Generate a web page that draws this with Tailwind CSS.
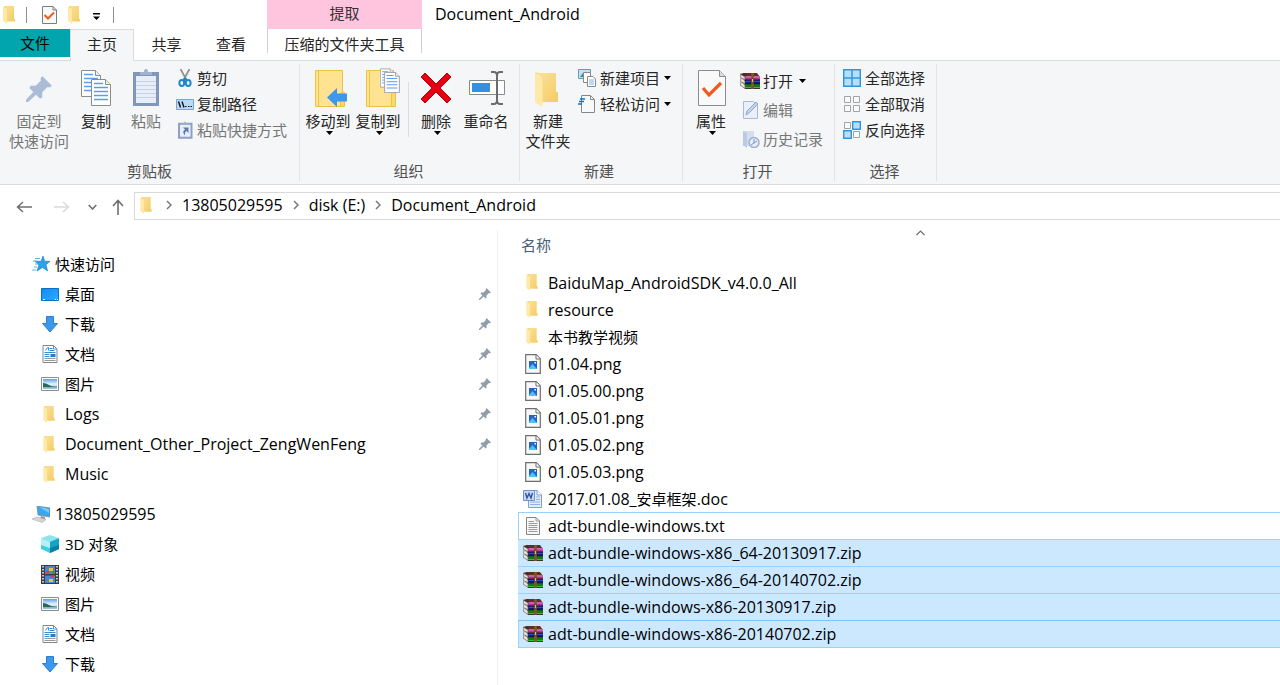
<!DOCTYPE html>
<html lang="zh-CN">
<head>
<meta charset="utf-8">
<title>Document_Android</title>
<script src="https://cdn.jsdelivr.net/npm/@tailwindcss/browser@4"></script>
</head>
<body class="min-h-screen flex flex-col overflow-hidden bg-white text-black text-[15px] leading-5 font-['Open_Sans','Noto_Sans_CJK_SC',sans-serif]">
<svg class="absolute w-0 h-0" aria-hidden="true">
  <linearGradient id="fg" x1="0" y1="0" x2="1" y2="1"><stop offset="0" stop-color="#fbe09a"/><stop offset="1" stop-color="#f3cd62"/></linearGradient>
  <linearGradient id="sky" x1="0" y1="0" x2="1" y2="1"><stop offset="0" stop-color="#0f8af0"/><stop offset="1" stop-color="#33aaff"/></linearGradient>
  <linearGradient id="pic" x1="0" y1="0" x2="0" y2="1"><stop offset="0" stop-color="#5f9fe0"/><stop offset=".5" stop-color="#e4f2fb"/><stop offset="1" stop-color="#8fc3e6"/></linearGradient>
  <symbol id="folder" viewBox="0 0 12 18"><path d="M2 0h9v13l1 0v2.500H4z" fill="url(#fg)"/><path d="M0 1l4 2v15l-4-3z" fill="#ffe9a9"/><path d="M0 1l2-1h1v2.500z" fill="#f6d67c"/></symbol>
  <symbol id="bigfolder" viewBox="0 0 26 36"><path d="M4 1h17v19h2v10H7z" fill="url(#fg)"/><path d="M0 1h3l5 4v26l-1 4-7-5z" fill="#ffe9a9"/><path d="M0 1h3l5 4v25" fill="none" stroke="#f6d780" stroke-width="1"/></symbol>
  <symbol id="clipfolder" viewBox="0 0 32 38"><path d="M.500.500h27v21l2 1v14H.500z" fill="#ffe391" stroke="#e9c545"/><path d="M3.500 1v35M25.500 36V24q2-4 4 0v12" fill="#fbd770" stroke="#e9c545"/></symbol>
  <symbol id="page" viewBox="0 0 20 27"><path d="M.500.500h14l5 5v21H.500z" fill="#fff" stroke="#8c8c8c"/><path d="M14.500.500v5h5" fill="#eee" stroke="#8c8c8c"/><path d="M3 8.500h14M3 12.500h14M3 16.500h14M3 20.500h14M3 4.500h9" stroke="#5b9bf0" stroke-width="1.300"/></symbol>
  <symbol id="check" viewBox="0 0 28 36"><path d="M.500.500h21l6 6v29H.500z" fill="#f9f9f9" stroke="#8d8d8d"/><path d="M21.500.500v6h6" fill="#ddd" stroke="#8d8d8d"/><path d="M5 18l6 7L23 13" fill="none" stroke="#f05a1c" stroke-width="3.200"/></symbol>
  <symbol id="pin" viewBox="0 0 12 12"><path d="M7.500 0L12 4.500l-1.200.800-.900-.200L7.500 7.500l0 2.300-1 .700L4.600 8.600 1 12H0v-1l3.400-3.600L1.500 5.500l.700-1 2.300 0L6.900 2.100 6.700 1.200z"/></symbol>
  <symbol id="rar" viewBox="0 0 20 16"><path d="M3 0h14l3 4H6z" fill="#5e2f22"/><path d="M0 1l4-1 3 4H3z" fill="#4a2a1c"/><path d="M4 3h16v4H5z" fill="#b5338f"/><path d="M6 4h14" stroke="#e58ad0"/><path d="M4 7h16v4H5z" fill="#14147c"/><path d="M6 8.300h14" stroke="#2f5de8"/><path d="M4 11h16v4.500H5z" fill="#107c12"/><path d="M5 14.500h15" stroke="#2bc42e"/><path d="M5 15.600h15M4 10.900h16M4 6.900h16" stroke="#221a1a" stroke-width=".900"/><path d="M0 1l5 3v2.500L1.500 5 5 8v2.500L1.500 9 5 12v3.500L0 12l1-2-1-2 1-2z" fill="#e8e4de" stroke="#6c625c" stroke-width=".700"/><path d="M12.500 0v16" stroke="#85552a" stroke-width="2.600"/><path d="M11.500 5.500h2v4h-2z" fill="#d8c080" stroke="#5a3a14" stroke-width=".800"/></symbol>
  <symbol id="down" viewBox="0 0 16 17"><path d="M4.500.500h7v7h4L8 16 .500 7.500h4z" fill="#3b98ec" stroke="#2b7fd0"/></symbol>
  <symbol id="doc" viewBox="0 0 15 18"><path d="M.500.500h10.500l3.500 3.500v13.500H.500z" fill="#fff" stroke="#858585"/><path d="M11 .500v3.500h3.500" fill="none" stroke="#858585"/><path d="M3 5.500l2-3h1v3M7 3.500h3M7 5.500h5M2 7.500h11M2 9.500h5M2 11.500h5" fill="none" stroke="#2f8fd8"/><path d="M8 9h5v3H8z" fill="#2f78c0"/><path d="M2 13.500h11M2 15.500h11" stroke="#999"/></symbol>
  <symbol id="photo" viewBox="0 0 18 14"><path d="M.500.500h17v13H.500z" fill="#fff" stroke="#8c8c8c"/><path d="M2 2h14v10H2z" fill="url(#pic)"/><path d="M2 6q3 0 6 2t8 1.500v.700H2z" fill="#286a55"/></symbol>
  <symbol id="png" viewBox="0 0 16 20"><path d="M.700.700h10.600l4 4v14.600H.700z" fill="#f8f8f8" stroke="#6e6e6e" stroke-width="1.200"/><path d="M11 1v4h4" fill="#fff" stroke="#6e6e6e"/><path d="M4 7h8v8H4z" fill="#2463c8"/><path d="M4 14l3.500-4 4.500 5H4z" fill="#4bc3f5"/><path d="M9.500 8h1.500v1.500H9.500z" fill="#fff"/></symbol>
  <symbol id="chev" viewBox="0 0 6 10"><path d="M1 1l4 4-4 4" fill="none" stroke="#777" stroke-width="1.500"/></symbol>
</svg>

<header class="bg-white">
  <div class="flex h-[29px] items-center">
    <div class="flex w-[267px] items-center pl-[3px]">
      <svg class="w-3 h-[18px]"><use href="#folder"/></svg>
      <span class="ml-[11px] h-4 w-px bg-[#8e8e8e]"></span>
      <button class="ml-[15px]" aria-label="属性"><svg class="block w-[15px] h-[18px]" viewBox="0 0 15 18"><path d="M.500.500h10.500l3.500 3.500v13.500H.500z" fill="#f9f9f9" stroke="#7d7d7d"/><path d="M11 .500v3.500h3.500" fill="none" stroke="#7d7d7d"/><path d="M2.500 9l3.500 3.500 6-6" fill="none" stroke="#f05a1c" stroke-width="2"/></svg></button>
      <button class="ml-[11px]" aria-label="新建文件夹"><svg class="block w-3 h-[18px]"><use href="#folder"/></svg></button>
      <button class="ml-[13px] mt-[3px]" aria-label="自定义快速访问工具栏"><svg class="block w-[7px] h-[7px]" viewBox="0 0 7 7"><path d="M0 0h7v1.500H0zM0 3.500h7L3.500 7z"/></svg></button>
      <span class="ml-[13px] h-4 w-px bg-[#8e8e8e]"></span>
    </div>
    <div class="flex h-[29px] w-[155px] items-center justify-center bg-[#ffc5df] pb-1 text-[#333]">提取</div>
    <h1 class="ml-[13px] pb-[2px] text-base leading-5">Document_Android</h1>
  </div>
  <nav class="flex h-8 border-b border-[#dadbdc] text-[#262626]">
    <button class="h-7 w-[70px] bg-[#00a5ad] text-black">文件</button>
    <button class="-mb-px h-8 w-16 border border-b-0 border-[#dadbdc] bg-[#f5f6f7] pb-1">主页</button>
    <button class="h-[30px] w-[65px]">共享</button>
    <button class="h-[30px] w-16">查看</button>
    <div class="ml-1 flex h-6 w-[155px] border-x border-[#cfcfcf]"><button class="h-[30px] w-full">压缩的文件夹工具</button></div>
  </nav>
</header>

<section class="flex h-[124px] border-b border-[#dadbdc] bg-[#f5f6f7] py-[3px] text-[#262626]" aria-label="功能区">
  <div class="flex w-[300px] flex-col border-r border-[#e2e3e4]">
    <div class="flex flex-1">
      <button class="ml-[7px] flex w-16 flex-col items-center pt-[3px] text-[#767676]">
        <span class="flex h-11 items-center"><svg class="w-[26px] h-[26px]" fill="#abbdd6"><use href="#pin"/></svg></span>固定到<br>快速访问
      </button>
      <button class="flex w-[50px] flex-col items-center pt-[3px]">
        <span class="h-11 pt-[3px]"><svg class="w-[30px] h-9" viewBox="0 0 30 36"><use href="#page" width="20" height="27"/><use href="#page" x="10" y="9" width="20" height="27"/></svg></span>复制
      </button>
      <button class="flex w-[50px] flex-col items-center pt-[3px] text-[#767676]">
        <span class="h-11 pt-[2px]"><svg class="w-[26px] h-[37px]" viewBox="0 0 26 37"><path d="M0 3h26v34H0z" fill="#8296bd"/><path d="M3 7h20v27H3z" fill="#e8eef8"/><path d="M3 12.500h20M3 16.500h20M3 20.500h20M3 24.500h20M3 28.500h20" stroke="#c6d2e8"/><path d="M7 3h4q0-3 2-3t2 3h4v3H7z" fill="#a3b2cf"/></svg></span>粘贴
      </button>
      <div class="ml-[5px] flex flex-col pt-px">
        <button class="flex h-[26px] items-center gap-[3px]"><svg class="w-[18px] h-[18px]" viewBox="0 0 18 18"><path d="M4.500 0l6 11M13.500 0l-6 11" stroke="#909090" stroke-width="1.700"/><g fill="none" stroke="#2089c9" stroke-width="2"><ellipse cx="5.800" cy="14" rx="2.400" ry="3"/><ellipse cx="12.200" cy="14" rx="2.400" ry="3"/></g><path d="M7 10l2-2 2 2-1 3H8z" fill="#2089c9"/></svg>剪切</button>
        <button class="flex h-[26px] items-center gap-[3px]"><svg class="w-[18px] h-[11px]" viewBox="0 0 18 11"><path d="M.500.500h17v10H.500z" fill="#b4dcf8" stroke="#7ba7c7"/><path d="M2.500 2.500l2 6M6 2.500l2 6" stroke="#111" stroke-width="1.400"/><path d="M9 7.500h1.500M12 7.500h1.500M14.500 7.500H16" stroke="#111"/></svg>复制路径</button>
        <button class="flex h-[26px] items-center gap-[3px] text-[#767676]"><svg class="w-[18px] h-[18px]" viewBox="0 0 18 18"><path d="M3 2.800h12.500v14H3z" fill="#e8eef8" stroke="#8ea1c4" stroke-width="2"/><path d="M6 2h2q1.200-3 2.400 0h2v2H6z" fill="#9fb0ce"/><path d="M7 6.500h5.500V12l-2-2q-2 1-1.500 4.500Q5.500 11 9 8.500z" fill="#5f7caf"/></svg>粘贴快捷方式</button>
      </div>
    </div>
    <div class="text-center text-[#505050]">剪贴板</div>
  </div>

  <div class="flex w-[220px] flex-col border-r border-[#e2e3e4]">
    <div class="flex flex-1">
      <button class="ml-[3px] flex w-[50px] flex-col items-center pt-[3px]">
        <span class="h-11 pl-[6px] pt-[3px]"><svg class="w-8 h-[38px]" viewBox="0 0 32 38"><use href="#clipfolder"/><path d="M12 27.500L22 18v5.500h10v8H22V37z" fill="#3b98ec"/></svg></span>移动到<svg class="ml-[3px] w-[7px] h-1" viewBox="0 0 7 4"><path d="M0 0h7L3.500 4z"/></svg>
      </button>
      <button class="flex w-[50px] flex-col items-center pt-[3px]">
        <span class="h-11 pl-[10px] pt-px"><svg class="w-[34px] h-10" viewBox="0 0 34 40"><use href="#clipfolder" y="2" width="32" height="38"/><use href="#page" x="14" width="14" height="20"/><use href="#page" x="18" y="4" width="16" height="21"/></svg></span>复制到<svg class="ml-[3px] w-[7px] h-1" viewBox="0 0 7 4"><path d="M0 0h7L3.500 4z"/></svg>
      </button>
      <span class="ml-[5px] mt-[18px] h-[55px] w-px bg-[#dcddde]"></span>
      <button class="ml-[2px] flex w-[50px] flex-col items-center pt-[3px]">
        <span class="h-11 pt-[5px]"><svg class="w-8 h-8" viewBox="0 0 32 32"><path d="M1 5l4-4 11 11L27 1l4 4-11 11 11 11-4 4-11-11L5 31l-4-4 11-11z" fill="#e60012" stroke="#b8000e"/></svg></span>删除<svg class="ml-[3px] w-[7px] h-1" viewBox="0 0 7 4"><path d="M0 0h7L3.500 4z"/></svg>
      </button>
      <button class="flex w-[50px] flex-col items-center pt-[3px]">
        <span class="h-11 pl-[2px] pt-1"><svg class="w-9 h-[34px]" viewBox="0 0 36 34"><path d="M.500 9.500h35v14H.500z" fill="#fff" stroke="#8a8a8a"/><path d="M3 12h18v9H3z" fill="#3490e4"/><path d="M28 3v28M22 1h3q3 0 3 4 0-4 3-4h3M22 33h3q3 0 3-4 0 4 3 4h3" fill="none" stroke="#6b6b6b" stroke-width="2"/></svg></span>重命名
      </button>
    </div>
    <div class="pr-[2px] text-center text-[#505050]">组织</div>
  </div>

  <div class="flex w-[163px] flex-col border-r border-[#e2e3e4]">
    <div class="flex flex-1">
      <button class="ml-[3px] flex w-[50px] flex-col items-center pt-[3px]">
        <span class="h-11 pt-[5px]"><svg class="w-[26px] h-9"><use href="#bigfolder"/></svg></span>新建<br>文件夹
      </button>
      <div class="ml-[5px] flex flex-col pt-px">
        <button class="flex h-[26px] items-center gap-1"><svg class="w-[18px] h-[18px]" viewBox="0 0 18 18"><path d="M.500.500h12v9H.500z" fill="#bfe3f2" stroke="#5aa0b8"/><path d="M2 8l3-4 3 4z" fill="#3b8d72"/><path d="M5.500 3.500h7v10h-7z" fill="#fff" stroke="#888"/><path d="M9.500 7.500H15l2.500 2.500v7.500h-8z" fill="#fff" stroke="#888"/><path d="M11 11h5M11 13h5M11 15h5" stroke="#7fb0ef"/></svg>新建项目<svg class="w-[7px] h-1" viewBox="0 0 7 4"><path d="M0 0h7L3.500 4z"/></svg></button>
        <button class="flex h-[26px] items-center gap-1"><svg class="w-[18px] h-[18px]" viewBox="0 0 18 18"><path d="M3.500.500h9l4 4v13h-13z" fill="#f9f9f9" stroke="#888"/><path d="M12.500.500v4h4" fill="none" stroke="#888"/><path d="M2 4h5M1 6.500h5M0 9h4" stroke="#1b74c4" stroke-width="1.500"/></svg>轻松访问<svg class="w-[7px] h-1" viewBox="0 0 7 4"><path d="M0 0h7L3.500 4z"/></svg></button>
      </div>
    </div>
    <div class="pr-1 text-center text-[#505050]">新建</div>
  </div>

  <div class="flex w-[152px] flex-col border-r border-[#e2e3e4]">
    <div class="flex flex-1">
      <button class="ml-[3px] flex w-[50px] flex-col items-center pt-[3px]">
        <span class="h-11 pl-[2px] pt-[3px]"><svg class="w-7 h-9"><use href="#check"/></svg></span>属性<svg class="ml-[3px] w-[7px] h-1" viewBox="0 0 7 4"><path d="M0 0h7L3.500 4z"/></svg>
      </button>
      <div class="ml-1 flex flex-col pt-[2px]">
        <button class="flex h-[29px] items-center gap-[3px]"><svg class="w-5 h-4"><use href="#rar"/></svg>打开<svg class="ml-[3px] w-[7px] h-1" viewBox="0 0 7 4"><path d="M0 0h7L3.500 4z"/></svg></button>
        <button class="flex h-[29px] items-center gap-[3px] text-[#767676]"><svg class="w-5 h-[18px]" viewBox="0 0 20 18"><path d="M3.500.500h10l4 4v13h-14z" fill="#eaf0f9" stroke="#a9bad6"/><path d="M6 14l1-4L16 1l2 2-9 9z" fill="#c3d2ea" stroke="#93a9cf"/></svg>编辑</button>
        <button class="flex h-[29px] items-center gap-[3px] text-[#767676]"><svg class="w-5 h-[18px]" viewBox="0 0 20 18"><path d="M3 1h11v15H3z" fill="#d4deee"/><path d="M3 1l4 2v15l-4-3z" fill="#bccbe3"/><circle cx="14" cy="12.500" r="5" fill="#e6edf8" stroke="#9db0d1" stroke-width="1.500"/><path d="M14 9v4l3-2M11 15l3-2" fill="none" stroke="#7f95be"/></svg>历史记录</button>
      </div>
    </div>
    <div class="pr-[2px] text-center text-[#505050]">打开</div>
  </div>

  <div class="flex w-[102px] flex-col border-r border-[#e2e3e4]">
    <div class="flex flex-1 flex-col pl-2 pt-px">
      <button class="flex h-[26px] items-center gap-1"><svg class="w-[18px] h-[18px]" viewBox="0 0 18 18"><path d="M.700.700h16.600v16.600H.700zM9 0v18M0 9h18" fill="#b5e0fd" stroke="#2f96e6" stroke-width="1.500"/></svg>全部选择</button>
      <button class="flex h-[26px] items-center gap-1"><svg class="w-[18px] h-[18px]" viewBox="0 0 18 18"><path d="M1.500 1.500h6v6h-6zM10.500 1.500h6v6h-6zM1.500 10.500h6v6h-6zM10.500 10.500h6v6h-6z" fill="#fafafa" stroke="#a3a3a3"/></svg>全部取消</button>
      <button class="flex h-[26px] items-center gap-1"><svg class="w-[18px] h-[18px]" viewBox="0 0 18 18"><path d="M1.500 1.500h6v6h-6zM10.500 10.500h6v6h-6z" fill="#fafafa" stroke="#a3a3a3"/><path d="M9.700.700h7.600v7.600H9.700zM.700 9.700h7.600v7.600H.700z" fill="#b5e0fd" stroke="#2f96e6" stroke-width="1.400"/></svg>反向选择</button>
    </div>
    <div class="pr-[2px] text-center text-[#505050]">选择</div>
  </div>
</section>

<nav class="flex h-[41px] items-center pt-[3px]" aria-label="地址栏">
  <button class="ml-4" aria-label="后退"><svg class="block w-4 h-3" viewBox="0 0 16 12"><path d="M7 1L1.500 6 7 11M1.500 6H16" fill="none" stroke="#6f6f6f" stroke-width="1.500"/></svg></button>
  <button class="ml-[22px]" aria-label="前进"><svg class="block w-4 h-3" viewBox="0 0 16 12"><path d="M9 1l5.500 5L9 11M14.500 6H0" fill="none" stroke="#dadada" stroke-width="1.500"/></svg></button>
  <button class="ml-[18px]" aria-label="最近的位置"><svg class="block w-[9px] h-[6px]" viewBox="0 0 9 6"><path d="M.700 1l3.800 4 3.800-4" fill="none" stroke="#6f6f6f" stroke-width="1.600"/></svg></button>
  <button class="ml-[15px]" aria-label="上移"><svg class="block w-3 h-4" viewBox="0 0 12 16"><path d="M1 7l5-5.500L11 7M6 1.500V16" fill="none" stroke="#6f6f6f" stroke-width="1.600"/></svg></button>
  <div class="-mt-[2px] ml-[10px] flex h-7 flex-1 items-center border border-r-0 border-[#d9d9d9] pb-[2px] pl-[5px] text-base leading-5">
    <svg class="w-3 h-[17px]"><use href="#folder"/></svg>
    <svg class="ml-[14px] w-[6px] h-[10px]"><use href="#chev"/></svg>
    <a href="#" class="ml-[10px]">13805029595</a>
    <svg class="ml-[10px] w-[6px] h-[10px]"><use href="#chev"/></svg>
    <a href="#" class="ml-[10px]">disk (E:)</a>
    <svg class="ml-[10px] w-[6px] h-[10px]"><use href="#chev"/></svg>
    <a href="#" class="ml-[10px]">Document_Android</a>
  </div>
</nav>

<main class="flex flex-1">
  <aside class="mt-1 w-[498px] border-r border-[#f0f0f0] pt-[19px]">
    <ul>
      <li><a href="#" class="flex h-[30px] items-center gap-[5px] pl-8"><svg class="w-[18px] h-4" viewBox="0 0 18 16"><path d="M11 0l1.700 5.300H18l-4 3.500 1.600 6.200-5-3.600L5 15l2-6L3 5.300h6z" fill="#2aa3ee" stroke="#1776b5" stroke-width=".600"/><path d="M3 2.500h5M1 5h4M3 8h3M2 11h3M0 14h4" stroke="#5bb8f0" stroke-width="1.100"/></svg>快速访问</a></li>
      <li class="flex h-[30px] items-center pl-[41px] pr-[6px]"><a href="#" class="flex flex-1 items-center gap-[6px]"><svg class="w-[18px] h-[13px]" viewBox="0 0 18 13"><path d="M.500.500h17v12H.500z" fill="url(#sky)" stroke="#0b70c0"/><path d="M2 11.500h2M14 11.500h1M16 11.500h1" stroke="#fff"/></svg>桌面</a><svg class="w-3 h-3" fill="#919da8"><use href="#pin"/></svg></li>
      <li class="flex h-[30px] items-center pl-[41px] pr-[6px]"><a href="#" class="flex flex-1 items-center gap-[6px]"><svg class="w-[18px] h-[17px]"><use href="#down"/></svg>下载</a><svg class="w-3 h-3" fill="#919da8"><use href="#pin"/></svg></li>
      <li class="flex h-[30px] items-center pl-[41px] pr-[6px]"><a href="#" class="flex flex-1 items-center gap-[6px]"><svg class="w-[18px] h-[18px]"><use href="#doc"/></svg>文档</a><svg class="w-3 h-3" fill="#919da8"><use href="#pin"/></svg></li>
      <li class="flex h-[30px] items-center pl-[41px] pr-[6px]"><a href="#" class="flex flex-1 items-center gap-[6px]"><svg class="w-[18px] h-[14px]"><use href="#photo"/></svg>图片</a><svg class="w-3 h-3" fill="#919da8"><use href="#pin"/></svg></li>
      <li class="flex h-[30px] items-center pl-[43px] pr-[6px]"><a href="#" class="flex flex-1 items-center gap-[10px] text-base leading-5"><svg class="w-3 h-[17px]"><use href="#folder"/></svg>Logs</a><svg class="w-3 h-3" fill="#919da8"><use href="#pin"/></svg></li>
      <li class="flex h-[30px] items-center pl-[43px] pr-[6px]"><a href="#" class="flex flex-1 items-center gap-[10px] text-base leading-5"><svg class="w-3 h-[17px]"><use href="#folder"/></svg>Document_Other_Project_ZengWenFeng</a><svg class="w-3 h-3" fill="#919da8"><use href="#pin"/></svg></li>
      <li class="flex h-[30px] items-center pl-[43px] pr-[6px]"><a href="#" class="flex flex-1 items-center gap-[10px] text-base leading-5"><svg class="w-3 h-[17px]"><use href="#folder"/></svg>Music</a></li>
    </ul>
    <ul class="mt-[10px]">
      <li><a href="#" class="flex h-[30px] items-center gap-[5px] pl-8 text-base leading-5"><svg class="w-[18px] h-[17px]" viewBox="0 0 18 17"><path d="M5 0l13 2v9L6 9z" fill="#3ba7ee" stroke="#6f8390" stroke-width=".700"/><path d="M7 1l10 2v4z" fill="#7cc8f8"/><path d="M9 10l4 1v2H8z" fill="#999"/><path d="M0 13l5-2 9 2.500-4 3z" fill="#d5d8da" stroke="#aaa" stroke-width=".600"/></svg>13805029595</a></li>
      <li><a href="#" class="flex h-[30px] items-center gap-[6px] pl-[41px]"><svg class="w-[18px] h-[18px]" viewBox="0 0 18 18"><path d="M0 3l9 3v12l-9-4z" fill="#3fcfe0"/><path d="M9 6l9-3v11l-9 4z" fill="#12a5c4"/><path d="M9 0l9 3-9 4-9-4z" fill="#8fe3ee"/><path d="M0 3l9 4v6l-9-3z" fill="#b5f0f5"/><path d="M9 13l9-3v4l-9 4z" fill="#0b7fa3"/></svg>3D 对象</a></li>
      <li><a href="#" class="flex h-[30px] items-center gap-[6px] pl-[41px]"><svg class="w-[18px] h-[19px]" viewBox="0 0 18 19"><path d="M0 0h18v19H0z" fill="#3c3c3c"/><path d="M4 1h10v8H4zM4 10.500h10V18H4z" fill="#4c85d6"/><path d="M8 3h4v3H8zM8 14h4v3H8z" fill="#f0c22e"/><path d="M5 6h3v2H5zM10 10.500h3v2h-3z" fill="#d43f31"/><path d="M11 6h3v3h-3z" fill="#3a9a3c"/><path d="M2 1v18M16 1v18" stroke="#eee" stroke-width="1.600" stroke-dasharray="1.500 1.500"/></svg>视频</a></li>
      <li><a href="#" class="flex h-[30px] items-center gap-[6px] pl-[41px]"><svg class="w-[18px] h-[14px]"><use href="#photo"/></svg>图片</a></li>
      <li><a href="#" class="flex h-[30px] items-center gap-[6px] pl-[41px]"><svg class="w-[18px] h-[18px]"><use href="#doc"/></svg>文档</a></li>
      <li><a href="#" class="flex h-[30px] items-center gap-[6px] pl-[41px]"><svg class="w-[18px] h-[17px]"><use href="#down"/></svg>下载</a></li>
    </ul>
  </aside>

  <section class="flex-1 pl-5" aria-label="文件列表">
    <div class="flex h-[43px] items-start">
      <button class="ml-[3px] mt-[9px] w-[395px] text-left text-[#4c607a]">名称</button>
      <svg class="mt-1 w-[9px] h-[6px]" viewBox="0 0 9 6"><path d="M.500 5l4-4 4 4" fill="none" stroke="#6f6f6f" stroke-width="1.200"/></svg>
    </div>
    <ul class="text-base leading-5">
      <li class="flex h-[27px] items-center gap-[10px] pl-2"><svg class="w-3 h-[17px]"><use href="#folder"/></svg>BaiduMap_AndroidSDK_v4.0.0_All</li>
      <li class="flex h-[27px] items-center gap-[10px] pl-2"><svg class="w-3 h-[17px]"><use href="#folder"/></svg>resource</li>
      <li class="flex h-[27px] items-center gap-[10px] pl-2 text-[15px]"><svg class="w-3 h-[17px]"><use href="#folder"/></svg>本书教学视频</li>
      <li class="flex h-[27px] items-center gap-[7px] pl-[7px]"><svg class="w-4 h-5"><use href="#png"/></svg>01.04.png</li>
      <li class="flex h-[27px] items-center gap-[7px] pl-[7px]"><svg class="w-4 h-5"><use href="#png"/></svg>01.05.00.png</li>
      <li class="flex h-[27px] items-center gap-[7px] pl-[7px]"><svg class="w-4 h-5"><use href="#png"/></svg>01.05.01.png</li>
      <li class="flex h-[27px] items-center gap-[7px] pl-[7px]"><svg class="w-4 h-5"><use href="#png"/></svg>01.05.02.png</li>
      <li class="flex h-[27px] items-center gap-[7px] pl-[7px]"><svg class="w-4 h-5"><use href="#png"/></svg>01.05.03.png</li>
      <li class="flex h-[27px] items-center gap-[5px] pl-[5px]"><svg class="w-5 h-5" viewBox="0 0 20 20"><path d="M5.500 1.500h9l4 4v13h-13z" fill="#e3edfb" stroke="#7e9fd2"/><path d="M14 1v5h5" fill="#fff" stroke="#7e9fd2"/><path d="M7 13h10M7 15.500h10M13 8h4M13 10.500h4" stroke="#8fb0e2"/><path d="M.500 1.500h11v10H.500z" fill="#c9d9f2" stroke="#6f92cc"/><path d="M2.500 4l1.500 5 2-4.500L8 9l1.500-5" fill="none" stroke="#2d55a8" stroke-width="1.400"/></svg><span>2017.01.08_<span class="text-[15px]">安卓框架</span>.doc</span></li>
      <li class="flex h-7 items-center gap-[7px] border border-r-0 border-[#99d1ff] pl-[6px]"><svg class="w-4 h-[18px]" viewBox="0 0 16 18"><path d="M1.500.500h9.500l3.500 3.500v13.500h-13z" fill="#f8f8f8" stroke="#848484"/><path d="M11 .500v3.500h3.500M3.500 4.500H9M3.500 6.500h9M3.500 8.500h9M3.500 10.500h9M3.500 12.500h9M3.500 14.500h9" fill="none" stroke="#9a9a9a"/></svg>adt-bundle-windows.txt</li>
      <li class="flex h-[27px] items-center gap-[5px] border-b border-[#99d1ff] bg-[#cce8ff] pl-[5px]"><svg class="w-5 h-4"><use href="#rar"/></svg>adt-bundle-windows-x86_64-20130917.zip</li>
      <li class="flex h-[27px] items-center gap-[5px] border-b border-[#99d1ff] bg-[#cce8ff] pl-[5px]"><svg class="w-5 h-4"><use href="#rar"/></svg>adt-bundle-windows-x86_64-20140702.zip</li>
      <li class="flex h-[27px] items-center gap-[5px] border-b border-[#7cc4fb] bg-[#cce8ff] pl-[5px]"><svg class="w-5 h-4"><use href="#rar"/></svg>adt-bundle-windows-x86-20130917.zip</li>
      <li class="flex h-[27px] items-center gap-[5px] border-b border-l border-[#99d1ff] bg-[#cce8ff] pl-1"><svg class="w-5 h-4"><use href="#rar"/></svg>adt-bundle-windows-x86-20140702.zip</li>
    </ul>
  </section>
</main>
</body>
</html>
